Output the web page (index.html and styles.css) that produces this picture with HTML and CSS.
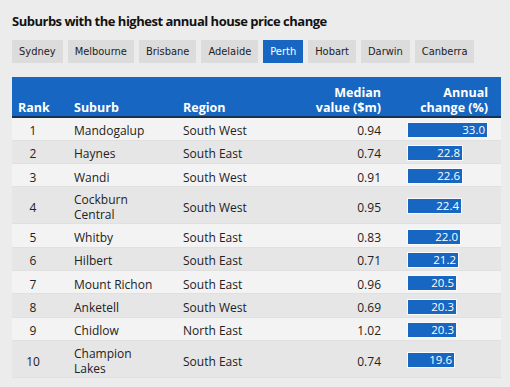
FILE: index.html
```html
<!DOCTYPE html>
<html>
<head>
<meta charset="utf-8">
<link rel="stylesheet" href="styles.css">
</head>
<body>
<h1 class="title">Suburbs with the highest annual house price change</h1>
<div class="tabs">
  <span class="tab">Sydney</span>
  <span class="tab">Melbourne</span>
  <span class="tab">Brisbane</span>
  <span class="tab">Adelaide</span>
  <span class="tab active">Perth</span>
  <span class="tab">Hobart</span>
  <span class="tab">Darwin</span>
  <span class="tab">Canberra</span>
</div>
<table class="data">
  <colgroup>
    <col class="c-rank"><col class="c-suburb"><col class="c-region"><col class="c-median"><col class="c-change">
  </colgroup>
  <thead>
    <tr>
      <th class="h-rank">Rank</th>
      <th>Suburb</th>
      <th>Region</th>
      <th class="num">Median<br>value ($m)</th>
      <th class="num h-change">Annual<br>change (%)</th>
    </tr>
  </thead>
  <tbody>
    <tr><td class="rank">1</td><td>Mandogalup</td><td>South West</td><td class="num">0.94</td><td class="chg"><span class="bar" style="width:81px">33.0</span></td></tr>
    <tr><td class="rank">2</td><td>Haynes</td><td>South East</td><td class="num">0.74</td><td class="chg"><span class="bar" style="width:56px">22.8</span></td></tr>
    <tr><td class="rank">3</td><td>Wandi</td><td>South West</td><td class="num">0.91</td><td class="chg"><span class="bar" style="width:56px">22.6</span></td></tr>
    <tr class="tall"><td class="rank">4</td><td>Cockburn<br>Central</td><td>South West</td><td class="num">0.95</td><td class="chg"><span class="bar" style="width:55px">22.4</span></td></tr>
    <tr><td class="rank">5</td><td>Whitby</td><td>South East</td><td class="num">0.83</td><td class="chg"><span class="bar" style="width:54px">22.0</span></td></tr>
    <tr><td class="rank">6</td><td>Hilbert</td><td>South East</td><td class="num">0.71</td><td class="chg"><span class="bar" style="width:52px">21.2</span></td></tr>
    <tr><td class="rank">7</td><td>Mount Richon</td><td>South East</td><td class="num">0.96</td><td class="chg"><span class="bar" style="width:50px">20.5</span></td></tr>
    <tr><td class="rank">8</td><td>Anketell</td><td>South West</td><td class="num">0.69</td><td class="chg"><span class="bar" style="width:50px">20.3</span></td></tr>
    <tr><td class="rank">9</td><td>Chidlow</td><td>North East</td><td class="num">1.02</td><td class="chg"><span class="bar" style="width:50px">20.3</span></td></tr>
    <tr class="tall"><td class="rank">10</td><td>Champion<br>Lakes</td><td>South East</td><td class="num">0.74</td><td class="chg"><span class="bar" style="width:48px">19.6</span></td></tr>
  </tbody>
</table>
</body>
</html>
```
FILE: styles.css
```css
html, body {
  margin: 0;
  padding: 0;
  background: #ececec;
}
body {
  padding: 0 9px 0 12px;
  font-family: "Open Sans", "Noto Sans", sans-serif;
  color: #222;
}
.title {
  margin: 0;
  padding-top: 12px;
  font-size: 13px;
  line-height: 18px;
  font-weight: 700;
  letter-spacing: -0.5px;
  color: #121212;
}
.tabs {
  display: flex;
  gap: 5px;
  margin-top: 10px;
}
.tab {
  display: block;
  height: 23px;
  line-height: 23px;
  padding: 0 7px;
  background: #dcdcdc;
  font-family: "DejaVu Sans Condensed", "DejaVu Sans", sans-serif;
  font-stretch: condensed;
  font-size: 11px;
  color: #222;
}
.tab.active {
  background: #1767c2;
  color: #fff;
}
.data {
  margin-top: 14px;
  width: 489px;
  border-collapse: collapse;
  table-layout: fixed;
  font-size: 12px;
}
.c-rank { width: 56px; }
.c-suburb { width: 109px; }
.c-region { width: 117px; }
.c-median { width: 93px; }
.c-change { width: 114px; }
thead tr {
  background: #1767c2;
  border-bottom: 2px solid #17324f;
}
th {
  height: 40px;
  box-sizing: border-box;
  padding: 0 6px 1px 6px;
  vertical-align: bottom;
  text-align: left;
  color: #fff;
  font-weight: 700;
  font-size: 12.5px;
  line-height: 14.5px;
}
th.num { text-align: right; }
th.h-change { padding-right: 13px; }
td {
  height: 23.33px;
  box-sizing: border-box;
  padding: 4px 6px 0 6px;
  line-height: 15px;
  border-bottom: 1px solid #e0e0e0;
  vertical-align: middle;
}
tbody tr:nth-child(odd) { background: #f3f3f3; }
tbody tr:nth-child(even) { background: #e6e6e6; }
tr.tall td { height: 37px; }
td.rank {
  text-align: center;
  padding: 4px 14px 0 0;
}
td.num { text-align: right; }
td.chg { padding: 2px 0 0 20px; }
.bar {
  display: block;
  box-sizing: border-box;
  height: 16px;
  line-height: 14px;
  background: #1767c2;
  border: 1px solid #fafafa;
  color: #fff;
  text-align: right;
  padding-right: 2px;
  font-size: 11.5px;
}
```
